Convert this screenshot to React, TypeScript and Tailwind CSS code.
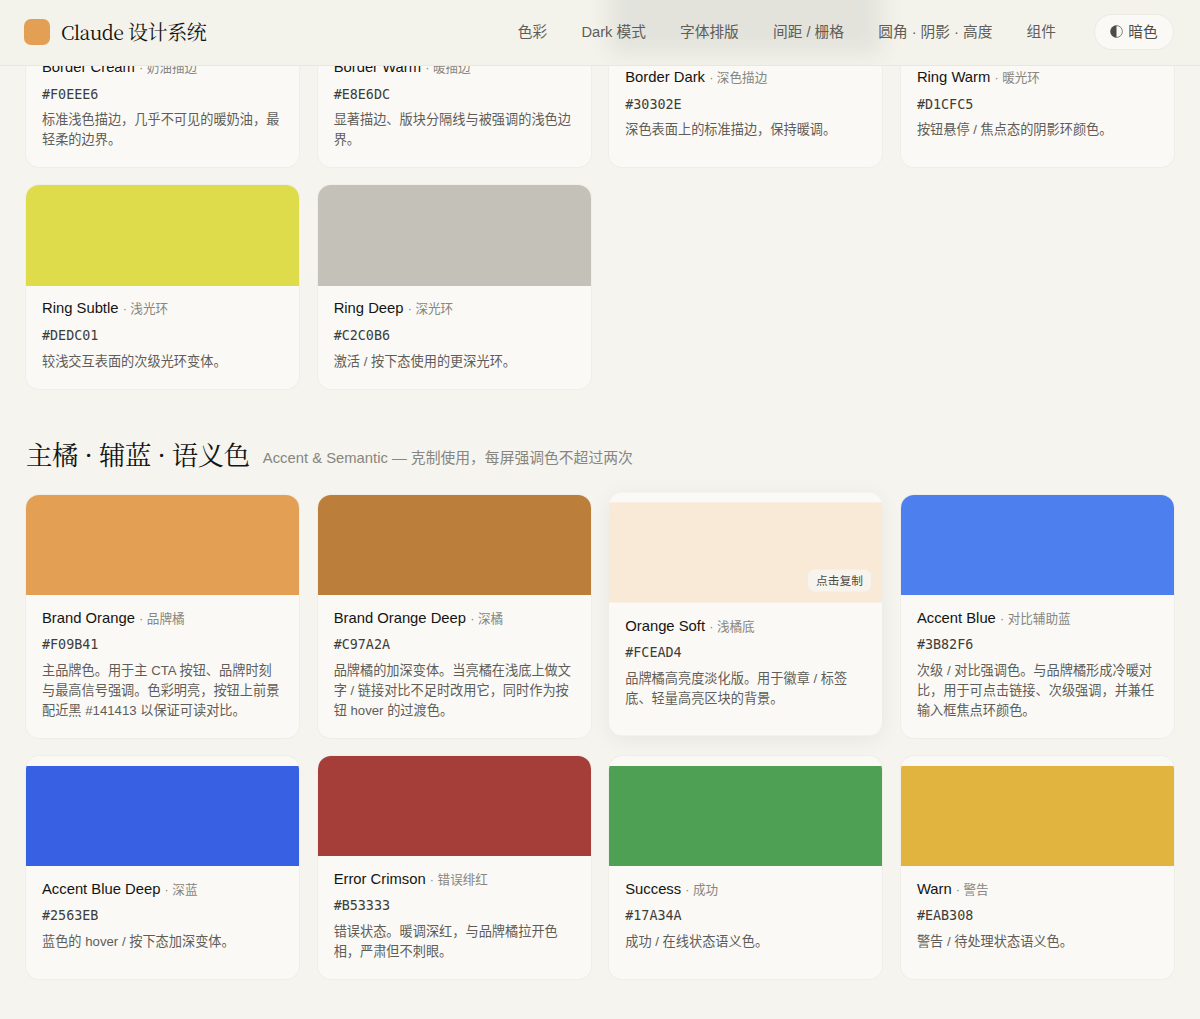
import React from "react";

type Swatch = {
  name: string;
  zh: string;
  hex: string;
  desc: string;
  color: string;
  active?: boolean;
};

const navLinks = [
  { label: "色彩", href: "#color" },
  { label: "Dark 模式", href: "#dark" },
  { label: "字体排版", href: "#type" },
  { label: "间距 / 栅格", href: "#spacing" },
  { label: "圆角 · 阴影 · 高度", href: "#radius" },
  { label: "组件", href: "#components" },
];

const borders: Swatch[] = [
  { name: "Border Cream", zh: "奶油描边", hex: "#F0EEE6", desc: "标准浅色描边，几乎不可见的暖奶油，最轻柔的边界。", color: "bg-[#f0eee6]" },
  { name: "Border Warm", zh: "暖描边", hex: "#E8E6DC", desc: "显著描边、版块分隔线与被强调的浅色边界。", color: "bg-[#e8e6dc]" },
  { name: "Border Dark", zh: "深色描边", hex: "#30302E", desc: "深色表面上的标准描边，保持暖调。", color: "bg-[#30302e]" },
  { name: "Ring Warm", zh: "暖光环", hex: "#D1CFC5", desc: "按钮悬停 / 焦点态的阴影环颜色。", color: "bg-[#d1cfc5]" },
  { name: "Ring Subtle", zh: "浅光环", hex: "#DEDC01", desc: "较浅交互表面的次级光环变体。", color: "bg-[#dedc4a]" },
  { name: "Ring Deep", zh: "深光环", hex: "#C2C0B6", desc: "激活 / 按下态使用的更深光环。", color: "bg-[#c4c1b9]" },
];

const accents: Swatch[] = [
  { name: "Brand Orange", zh: "品牌橘", hex: "#F09B41", desc: "主品牌色。用于主 CTA 按钮、品牌时刻与最高信号强调。色彩明亮，按钮上前景配近黑 #141413 以保证可读对比。", color: "bg-[#e39f53]" },
  { name: "Brand Orange Deep", zh: "深橘", hex: "#C97A2A", desc: "品牌橘的加深变体。当亮橘在浅底上做文字 / 链接对比不足时改用它，同时作为按钮 hover 的过渡色。", color: "bg-[#bc7e3b]" },
  { name: "Orange Soft", zh: "浅橘底", hex: "#FCEAD4", desc: "品牌橘高亮度淡化版。用于徽章 / 标签底、轻量高亮区块的背景。", color: "bg-[#f9ead8]", active: true },
  { name: "Accent Blue", zh: "对比辅助蓝", hex: "#3B82F6", desc: "次级 / 对比强调色。与品牌橘形成冷暖对比，用于可点击链接、次级强调，并兼任输入框焦点环颜色。", color: "bg-[#4d80ee]" },
  { name: "Accent Blue Deep", zh: "深蓝", hex: "#2563EB", desc: "蓝色的 hover / 按下态加深变体。", color: "bg-[#3860e2]" },
  { name: "Error Crimson", zh: "错误绯红", hex: "#B53333", desc: "错误状态。暖调深红，与品牌橘拉开色相，严肃但不刺眼。", color: "bg-[#a53d39]" },
  { name: "Success", zh: "成功", hex: "#17A34A", desc: "成功 / 在线状态语义色。", color: "bg-[#4ea154]" },
  { name: "Warn", zh: "警告", hex: "#EAB308", desc: "警告 / 待处理状态语义色。", color: "bg-[#e0b43e]" },
];

const SwatchCard: React.FC<{ swatch: Swatch }> = ({ swatch }) => (
  <button
    className={`flex flex-col justify-center overflow-hidden rounded-[13px] bg-[#faf9f5] text-left ${
      swatch.active
        ? "-translate-y-[2.5px] shadow-[0_4px_22px_rgba(0,0,0,0.06)]"
        : "shadow-[0_0_0_1px_#f0eee8]"
    }`}
  >
    <span className={`relative block h-[100.5px] w-full shrink-0 ${swatch.color}`}>
      {swatch.active && (
        <span className="absolute right-[11px] bottom-[11px] rounded-[7px] bg-[#f6f4ec] px-[8.5px] text-[11.7px] leading-[22px] text-[#4d4c48]">
          点击复制
        </span>
      )}
    </span>
    <span className="block w-full px-4 pt-[11.5px] pb-[16.7px]">
      <span className="block text-[14.8px] leading-[22px] text-[#141413]">
        {swatch.name}{" "}
        <span className="text-[12.6px] text-[#87867f]">· {swatch.zh}</span>
      </span>
      <span className="mt-[4.6px] block font-['DejaVu_Sans_Mono',monospace] text-[13.4px] leading-[22px] text-[#3d3d3a]">
        {swatch.hex}
      </span>
      <span className="mt-[4.9px] block text-[13.2px] leading-5 text-[#5e5d59]">{swatch.desc}</span>
    </span>
  </button>
);

const SwatchGrid: React.FC<{ items: Swatch[] }> = ({ items }) => (
  <div className="grid grid-cols-4 gap-x-[18.5px] gap-y-[18.2px]">
    {items.map((s) => (
      <SwatchCard key={s.name} swatch={s} />
    ))}
  </div>
);

export default function App() {
  return (
    <div className="h-[1019px] overflow-hidden bg-[#f5f4ef] font-['Liberation_Sans','Noto_Sans_CJK_SC',sans-serif]" lang="zh-CN">
      <header className="fixed inset-x-0 top-0 z-50 flex h-[66px] items-center overflow-hidden border-b border-[#e9e7df] bg-[#f3f3ec] pr-[26px] pb-[2px] pl-6">
        {/* Frosted shade of the dark swatch scrolled under the bar */}
        <div className="absolute -top-[46px] left-[609px] -z-10 h-[100px] w-[273px] bg-[#30302e] opacity-[0.08] blur-[11px]" />

        {/* Brand */}
        <div className="flex items-center gap-[11px]">
          <span className="size-[26px] rounded-[7px] bg-[#e39f53]" />
          <span className="font-['Noto_Serif_CJK_SC','Liberation_Serif',serif] text-[20px] leading-8 tracking-[-0.4px] text-[#141413]">
            <span className="text-[19.4px] tracking-[-0.6px]">Claude</span> 设计系统
          </span>
        </div>

        <nav className="ml-auto flex items-center gap-[34.2px] pt-px text-[14.7px] whitespace-nowrap text-[#5e5d59]">
          {navLinks.map((link) => (
            <a key={link.href} href={link.href}>
              {link.label}
            </a>
          ))}
        </nav>

        <button className="ml-[38px] flex h-9 w-20 items-center justify-center gap-[5px] rounded-full border border-[#eceae3] bg-[#faf9f5] text-[14.7px] text-[#4d4c48]">
          <svg className="size-[13px]" viewBox="0 0 13 13">
            <circle cx="6.5" cy="6.5" r="5.9" fill="none" stroke="currentColor" strokeWidth="0.7" />
            <path d="M6.5 0.6a5.9 5.9 0 0 0 0 11.8z" fill="currentColor" />
          </svg>
          <span className="pt-[2px]">暗色</span>
        </button>
      </header>

      <main className="-mt-[56px] px-[26px]">
        <SwatchGrid items={borders} />

        <div className="mt-[43px] mb-[19px] flex h-11 items-baseline gap-[13px]">
          <h2 className="font-['Noto_Serif_CJK_SC','Liberation_Serif',serif] text-[26.4px] leading-[44px] tracking-[-0.4px] text-[#141413]">
            主橘 · 辅蓝 · 语义色
          </h2>
          <p className="-translate-y-[2px] text-[14.8px] text-[#87867f]">Accent &amp; Semantic — 克制使用，每屏强调色不超过两次</p>
        </div>

        <SwatchGrid items={accents} />
      </main>
    </div>
  );
}
